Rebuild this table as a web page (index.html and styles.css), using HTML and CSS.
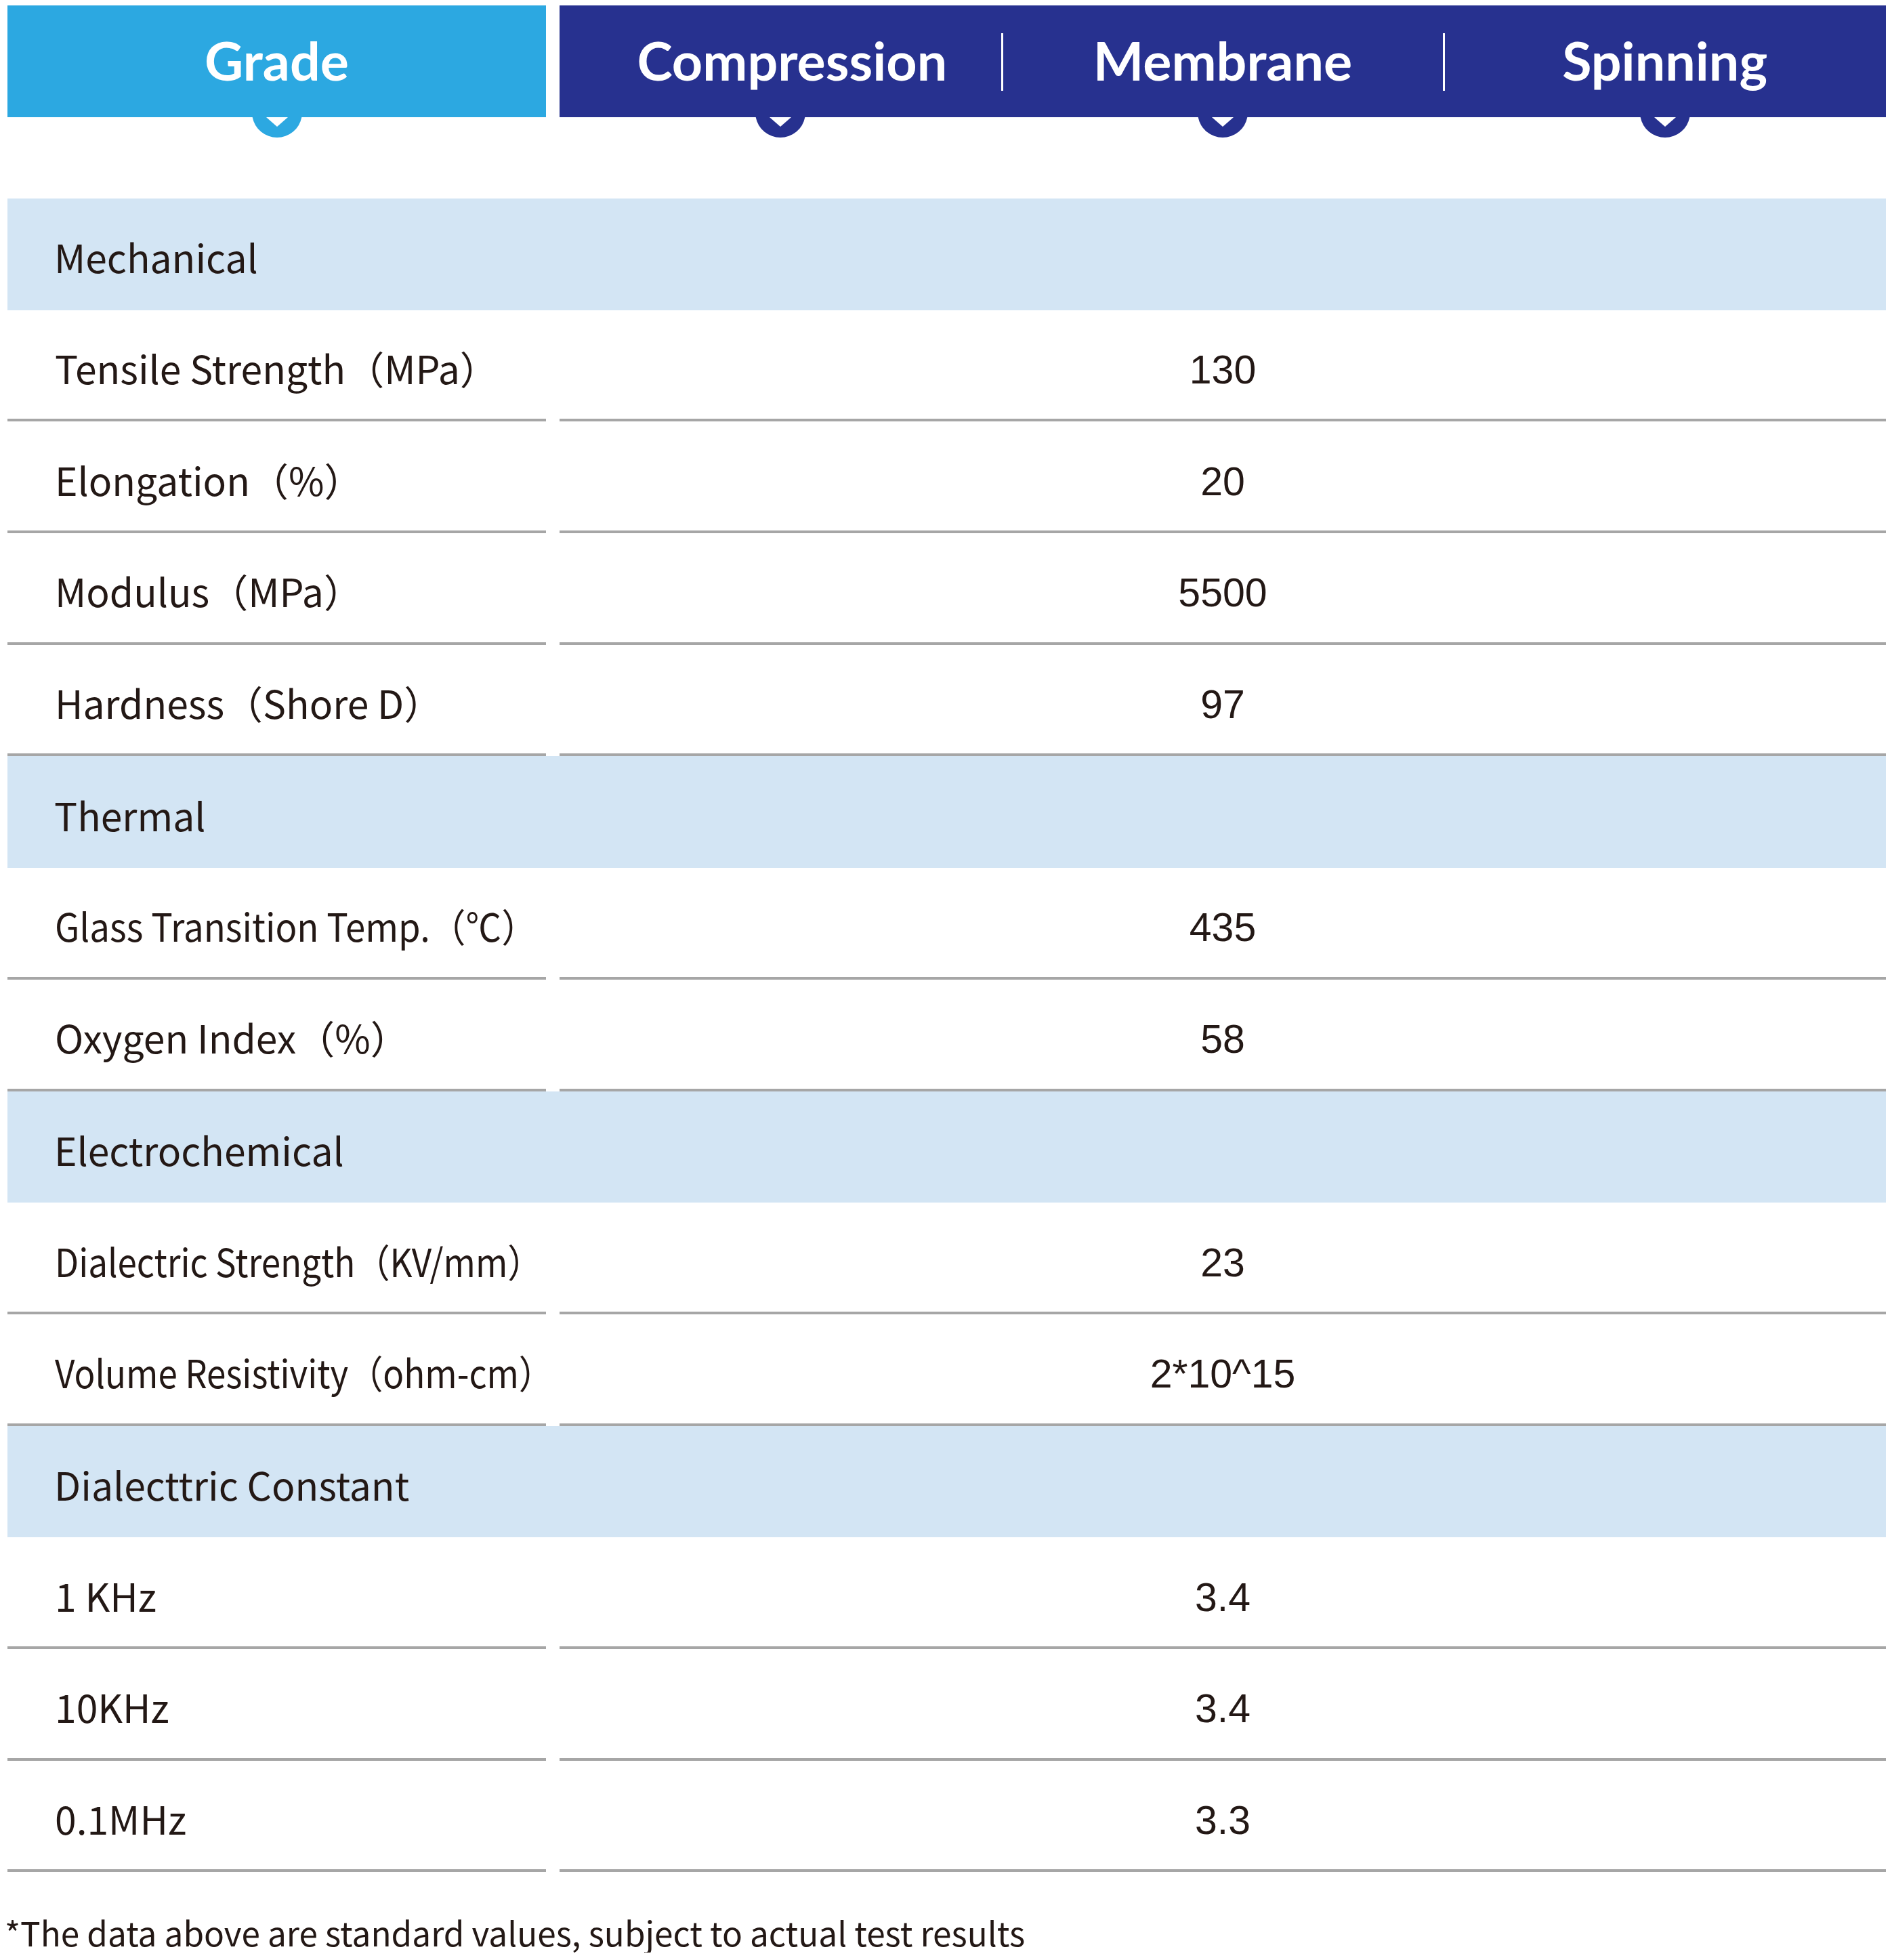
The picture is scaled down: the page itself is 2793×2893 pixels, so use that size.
FILE: index.html
```html
<!DOCTYPE html>
<html lang="en">
<head>
<meta charset="utf-8">
<title>Grade table</title>
<link rel="stylesheet" href="styles.css">
</head>
<body>
<div class="sheet">
  <div class="tabs">
    <div class="tab tab-grade">
      <span class="tab-label">Grade</span>
      <svg class="chev" viewBox="0 0 74 30" width="74" height="30"><path class="chev-bg" d="M0.67 0 A37 37 0 0 0 73.33 0 Z"/><path class="chev-arrow" d="M21 0 L53 0 L37 14 Z"/></svg>
    </div>
    <div class="tab-group">
      <div class="tab tab-first">
        <span class="tab-label">Compression</span>
        <svg class="chev" viewBox="0 0 74 30" width="74" height="30"><path class="chev-bg" d="M0.67 0 A37 37 0 0 0 73.33 0 Z"/><path class="chev-arrow" d="M21 0 L53 0 L37 14 Z"/></svg>
      </div>
      <div class="tab tab-sep">
        <span class="tab-label">Membrane</span>
        <svg class="chev" viewBox="0 0 74 30" width="74" height="30"><path class="chev-bg" d="M0.67 0 A37 37 0 0 0 73.33 0 Z"/><path class="chev-arrow" d="M21 0 L53 0 L37 14 Z"/></svg>
      </div>
      <div class="tab tab-sep">
        <span class="tab-label">Spinning</span>
        <svg class="chev" viewBox="0 0 74 30" width="74" height="30"><path class="chev-bg" d="M0.67 0 A37 37 0 0 0 73.33 0 Z"/><path class="chev-arrow" d="M21 0 L53 0 L37 14 Z"/></svg>
      </div>
    </div>
  </div>

  <div class="table">
    <div class="band">Mechanical</div>
    <div class="row"><div class="cell label">Tensile Strength（MPa）</div><div class="cell value">130</div></div>
    <div class="row"><div class="cell label">Elongation（%）</div><div class="cell value">20</div></div>
    <div class="row"><div class="cell label">Modulus（MPa）</div><div class="cell value">5500</div></div>
    <div class="row"><div class="cell label">Hardness（Shore D）</div><div class="cell value">97</div></div>
    <div class="band">Thermal</div>
    <div class="row"><div class="cell label"><span class="narrow narrow-slight">Glass Transition Temp.（℃）</span></div><div class="cell value">435</div></div>
    <div class="row"><div class="cell label">Oxygen Index（%）</div><div class="cell value">58</div></div>
    <div class="band">Electrochemical</div>
    <div class="row"><div class="cell label"><span class="narrow">Dialectric Strength（KV/mm）</span></div><div class="cell value">23</div></div>
    <div class="row"><div class="cell label"><span class="narrow">Volume Resistivity（ohm-cm）</span></div><div class="cell value">2*10^15</div></div>
    <div class="band">Dialecttric Constant</div>
    <div class="row"><div class="cell label">1 KHz</div><div class="cell value">3.4</div></div>
    <div class="row"><div class="cell label">10KHz</div><div class="cell value">3.4</div></div>
    <div class="row"><div class="cell label">0.1MHz</div><div class="cell value">3.3</div></div>
  </div>

  <p class="note">*The data above are standard values, subject to actual test results</p>
</div>
</body>
</html>
```

FILE: styles.css
```css
html, body {
  margin: 0;
  padding: 0;
  background: #ffffff;
}

.sheet {
  width: 2773px;
  padding: 8px 0 0 11px;
  color: #231815;
}

.tabs {
  display: grid;
  grid-template-columns: 795px 1958px;
  column-gap: 20px;
  height: 165px;
  margin-bottom: 120px;
}

.tab {
  position: relative;
  display: flex;
  align-items: center;
  justify-content: center;
  height: 165px;
  color: #ffffff;
  font-family: "Lato", "Open Sans", sans-serif;
  font-weight: 700;
  font-size: 79px;
}

.tab-grade {
  background: #2ca8e1;
}

.tab-grade .chev-bg {
  fill: #2ca8e1;
}

.tab-group {
  display: grid;
  grid-template-columns: 1fr 1fr 1fr;
  background: #27318f;
}

.tab-group .chev-bg {
  fill: #27318f;
}

.tab-label {
  display: block;
  line-height: 1;
  margin-top: -4px;
}

.tab-first .tab-label {
  margin-left: 34px;
}

.tab-sep::before {
  content: "";
  position: absolute;
  left: -1px;
  top: 41px;
  width: 3px;
  height: 85px;
  background: #ffffff;
}

.chev {
  position: absolute;
  top: 100%;
  left: 50%;
  margin-left: -37px;
  display: block;
}

.chev-arrow {
  fill: #ffffff;
}

.table {
  display: flex;
  flex-direction: column;
}

.band {
  height: 164.7px;
  box-sizing: border-box;
  background: #d3e5f4;
  display: flex;
  align-items: center;
  padding: 6px 0 0 69px;
  font-family: "Noto Sans CJK SC", "Noto Sans", sans-serif;
  font-size: 57px;
}

.row {
  display: grid;
  grid-template-columns: 795px 1958px;
  column-gap: 20px;
  height: 164.7px;
}

.cell {
  display: flex;
  align-items: center;
  box-sizing: border-box;
  border-bottom: 4px solid #a6a6a6;
  padding-top: 8px;
}

.label {
  padding-left: 70px;
  font-family: "Noto Sans CJK SC", "Noto Sans", sans-serif;
  font-size: 57px;
  white-space: nowrap;
}

.narrow {
  display: inline-block;
  transform: scaleX(0.897);
  transform-origin: left center;
}

.narrow-slight {
  transform: scaleX(0.925);
}

.value {
  justify-content: center;
  padding-top: 16px;
  font-family: "Liberation Sans", Arial, sans-serif;
  font-size: 59px;
}

.note {
  margin: 59px 0 0 -4px;
  font-family: "Noto Sans CJK SC", "Noto Sans", sans-serif;
  font-size: 49.5px;
  line-height: 1.2;
  white-space: nowrap;
}
```
